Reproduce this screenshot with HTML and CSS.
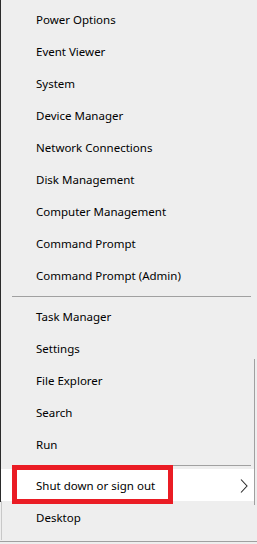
FILE: index.html
```html
<!DOCTYPE html>
<html lang="en">
<head>
    <meta charset="UTF-8">
    <meta name="viewport" content="width=device-width, initial-scale=1.0">
    <title>Quick Link Menu</title>
    <link rel="stylesheet" href="styles.css">
</head>
<body>
    <div class="menu">
        <!-- First group -->
        <div class="group">
            <div class="item">Power Options</div>
            <div class="item">Event Viewer</div>
            <div class="item">System</div>
            <div class="item">Device Manager</div>
            <div class="item">Network Connections</div>
            <div class="item">Disk Management</div>
            <div class="item">Computer Management</div>
            <div class="item">Command Prompt</div>
            <div class="item">Command Prompt (Admin)</div>
        </div>

        <hr class="divider">

        <!-- Second group -->
        <div class="group">
            <div class="item">Task Manager</div>
            <div class="item">Settings</div>
            <div class="item">File Explorer</div>
            <div class="item">Search</div>
            <div class="item">Run</div>
        </div>

        <hr class="divider">

        <!-- Hovered item with the red annotation box -->
        <div class="item item-hover">
            <span>Shut down or sign out</span>
            <svg class="chevron" width="8" height="14" viewBox="0 0 8 14">
                <polyline points="1,0.5 7,7 1,13.5" fill="none" stroke="#2a2a2a" stroke-width="1.1"/>
            </svg>
            <div class="highlight-box"></div>
        </div>

        <div class="bottom">
            <div class="item">Desktop</div>
        </div>

        <div class="edge-line"></div>
    </div>
</body>
</html>
```

FILE: styles.css
```css
body {
    margin: 0;
    background-color: #eeeeee;
    font-family: 'Segoe UI', 'Noto Sans', sans-serif;
    font-size: 11.5px;
    color: #000;
}

.menu {
    position: relative;
    width: 257px;
    height: 542px;
    padding-top: 3px;
    box-sizing: border-box;
    background-color: #eeeeee;
    border-bottom: 1px solid #a0a0a0;
}

/* dark left edge of the window behind */
.menu::before {
    content: '';
    position: absolute;
    left: 0;
    top: 0;
    width: 1px;
    height: 502px;
    background-color: #2b2b2b;
}

.item {
    height: 32px;
    display: flex;
    align-items: center;
    padding-left: 36px;
    white-space: nowrap;
}

.divider {
    border: none;
    border-top: 1px solid #a0a0a0;
    height: 0;
    width: 239px;
    margin: 5px 0 3px 12px;
}

.item-hover {
    position: relative;
    background-color: #ffffff;
    margin: 0 2px 0 1px;
    padding-left: 35px;
}

.chevron {
    position: absolute;
    left: 239px;
    top: 10px;
}

.highlight-box {
    position: absolute;
    left: 11px;
    top: -4px;
    width: 151px;
    height: 29px;
    border: 5px solid #ea1c24;
}

.bottom {
    margin-left: 1px;
    border-left: 1px solid #c8c8c8;
    height: 39px;
}

.bottom .item {
    padding-left: 34px;
}

.edge-line {
    position: absolute;
    left: 254px;
    top: 359px;
    width: 1px;
    height: 146px;
    background-color: #a0a0a0;
}
```
